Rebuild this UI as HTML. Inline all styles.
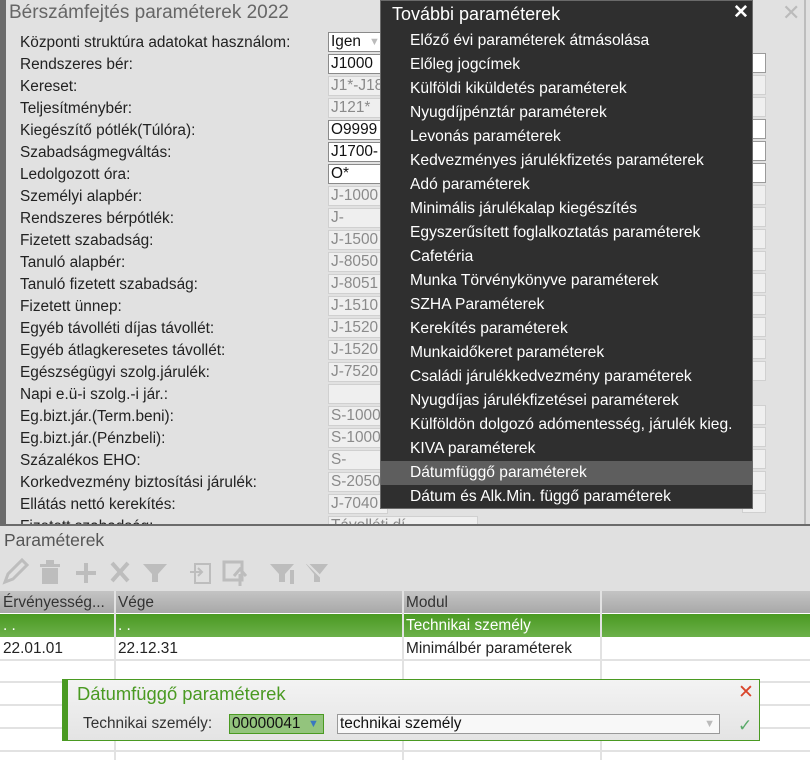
<!DOCTYPE html>
<html><head><meta charset="utf-8"><style>
*{margin:0;padding:0;box-sizing:border-box}
body{width:810px;height:760px;overflow:hidden;background:#e0e0e0;font-family:"Liberation Sans",Arial,sans-serif;position:relative}
.abs{position:absolute}
#top{left:0;top:0;width:810px;height:526px;background:#e1e1e1;border-left:6px solid #6b6b6b;border-bottom:2px solid #6b6b6b;overflow:hidden}
.lbl{position:absolute;left:14px;font-size:15.4px;color:#222;line-height:20px;white-space:nowrap}
.inp{position:absolute;left:322px;width:60px;height:20px;font-size:15.4px;line-height:18px;padding-left:2px;color:#8a8a8a;background:#efefef;border:1px solid #d0d0d0;overflow:hidden;white-space:nowrap}
.inp.w{background:#fff;border:1px solid #8a8a8a;color:#111}
.rb{position:absolute;left:736px;width:24px;height:20px;background:#efefef;border:1px solid #d0d0d0}
.rb.w{background:#fff;border-color:#9a9a9a}
#menu{left:380px;top:0;width:373px;height:509px;background:#2f2f2f;border:1px solid #6a6a6a;color:#fff}
.mi{position:absolute;left:29px;font-size:15.6px;line-height:24px;height:24px;white-space:nowrap}
.hd{background:linear-gradient(#c4c4c4,#a8a8a8);height:22px;top:591px}
.cell{position:absolute;font-size:15.4px;line-height:23px;padding-left:3px;white-space:nowrap}
.hl{position:absolute;left:0;width:810px;height:2px;background:#e2e2e2}
.vl{position:absolute;width:2px;background:#e2e2e2}
</style></head><body>
<div id="top" class="abs">
<div class="abs" style="left:3px;top:2px;font-size:19px;color:#666">Bérszámfejtés paraméterek 2022</div>
<div class="abs" style="left:776px;top:0px;font-size:22px;color:#bbb">✕</div>
<div class="lbl" style="top:33px">Központi struktúra adatokat használom:</div>
<div class="lbl" style="top:55px">Rendszeres bér:</div>
<div class="lbl" style="top:77px">Kereset:</div>
<div class="lbl" style="top:99px">Teljesítménybér:</div>
<div class="lbl" style="top:121px">Kiegészítő pótlék(Túlóra):</div>
<div class="lbl" style="top:143px">Szabadságmegváltás:</div>
<div class="lbl" style="top:165px">Ledolgozott óra:</div>
<div class="lbl" style="top:187px">Személyi alapbér:</div>
<div class="lbl" style="top:209px">Rendszeres bérpótlék:</div>
<div class="lbl" style="top:231px">Fizetett szabadság:</div>
<div class="lbl" style="top:253px">Tanuló alapbér:</div>
<div class="lbl" style="top:275px">Tanuló fizetett szabadság:</div>
<div class="lbl" style="top:297px">Fizetett ünnep:</div>
<div class="lbl" style="top:319px">Egyéb távolléti díjas távollét:</div>
<div class="lbl" style="top:341px">Egyéb átlagkeresetes távollét:</div>
<div class="lbl" style="top:363px">Egészségügyi szolg.járulék:</div>
<div class="lbl" style="top:385px">Napi e.ü-i szolg.-i jár.:</div>
<div class="lbl" style="top:407px">Eg.bizt.jár.(Term.beni):</div>
<div class="lbl" style="top:429px">Eg.bizt.jár.(Pénzbeli):</div>
<div class="lbl" style="top:451px">Százalékos EHO:</div>
<div class="lbl" style="top:473px">Korkedvezmény biztosítási járulék:</div>
<div class="lbl" style="top:495px">Ellátás nettó kerekítés:</div>
<div class="lbl" style="top:517px">Fizetett szabadság:</div>
<div class="inp w" style="top:32px">Igen<span style="position:absolute;left:40px;top:0;color:#bbb;font-size:11px">▼</span></div>
<div class="inp w" style="top:54px">J1000</div>
<div class="inp" style="top:76px">J1*-J18</div>
<div class="inp" style="top:98px">J121*</div>
<div class="inp w" style="top:120px">O9999</div>
<div class="inp w" style="top:142px">J1700-</div>
<div class="inp w" style="top:164px">O*</div>
<div class="inp" style="top:186px">J-1000</div>
<div class="inp" style="top:208px">J-</div>
<div class="inp" style="top:230px">J-1500</div>
<div class="inp" style="top:252px">J-8050</div>
<div class="inp" style="top:274px">J-8051</div>
<div class="inp" style="top:296px">J-1510</div>
<div class="inp" style="top:318px">J-1520</div>
<div class="inp" style="top:340px">J-1520</div>
<div class="inp" style="top:362px">J-7520</div>
<div class="inp" style="top:384px"></div>
<div class="inp" style="top:406px">S-1000</div>
<div class="inp" style="top:428px">S-1000</div>
<div class="inp" style="top:450px">S-</div>
<div class="inp" style="top:472px">S-2050</div>
<div class="inp" style="top:494px">J-7040</div>
<div class="inp" style="top:516px;width:150px">Távolléti dí</div>
<div class="rb w" style="top:53px"></div><div class="rb" style="top:75px"></div><div class="rb" style="top:97px"></div>
<div class="rb w" style="top:119px"></div><div class="rb w" style="top:141px"></div><div class="rb w" style="top:163px"></div>
<div class="rb" style="top:185px"></div><div class="rb" style="top:207px"></div><div class="rb" style="top:229px"></div>
<div class="rb" style="top:251px"></div><div class="rb" style="top:273px"></div><div class="rb" style="top:295px"></div>
<div class="rb" style="top:317px"></div><div class="rb" style="top:339px"></div><div class="rb" style="top:361px"></div>
<div class="rb" style="top:405px"></div><div class="rb" style="top:427px"></div><div class="rb" style="top:449px"></div>
<div class="rb" style="top:471px"></div><div class="rb" style="top:493px"></div>
<div class="abs" style="left:798px;top:0;width:2px;height:526px;background:#bdbdbd"></div>
</div>
<div id="menu" class="abs">
<div class="abs" style="left:11px;top:3px;font-size:18px">További paraméterek</div>
<div class="abs" style="left:352px;top:0px;font-size:19px;font-weight:bold">✕</div>
<div class="abs" style="left:0;top:460px;width:371px;height:24px;background:#5e5e5e"></div>
<div class="mi" style="top:28px">Előző évi paraméterek átmásolása</div>
<div class="mi" style="top:52px">Előleg jogcímek</div>
<div class="mi" style="top:76px">Külföldi kiküldetés paraméterek</div>
<div class="mi" style="top:100px">Nyugdíjpénztár paraméterek</div>
<div class="mi" style="top:124px">Levonás paraméterek</div>
<div class="mi" style="top:148px">Kedvezményes járulékfizetés paraméterek</div>
<div class="mi" style="top:172px">Adó paraméterek</div>
<div class="mi" style="top:196px">Minimális járulékalap kiegészítés</div>
<div class="mi" style="top:220px">Egyszerűsített foglalkoztatás paraméterek</div>
<div class="mi" style="top:244px">Cafetéria</div>
<div class="mi" style="top:268px">Munka Törvénykönyve paraméterek</div>
<div class="mi" style="top:292px">SZHA Paraméterek</div>
<div class="mi" style="top:316px">Kerekítés paraméterek</div>
<div class="mi" style="top:340px">Munkaidőkeret paraméterek</div>
<div class="mi" style="top:364px">Családi járulékkedvezmény paraméterek</div>
<div class="mi" style="top:388px">Nyugdíjas járulékfizetései paraméterek</div>
<div class="mi" style="top:412px">Külföldön dolgozó adómentesség, járulék kieg.</div>
<div class="mi" style="top:436px">KIVA paraméterek</div>
<div class="mi" style="top:460px">Dátumfüggő paraméterek</div>
<div class="mi" style="top:484px">Dátum és Alk.Min. függő paraméterek</div>
</div>
<div class="abs" style="left:4px;top:530px;font-size:17.5px;color:#555">Paraméterek</div>
<svg class="abs" style="left:0;top:556px" width="340" height="32" fill="#bdbdbd" stroke="#bdbdbd">
<path d="M5 26 L8 18 L22 4 L27 9 L13 23 Z" fill="none" stroke-width="3"/>
<rect x="40" y="8" width="20" height="3" stroke="none"/><rect x="46" y="4" width="8" height="4" stroke="none"/>
<rect x="42" y="12" width="16" height="16" stroke="none"/>
<path d="M86 7 V27 M76 17 H96" stroke-width="4" fill="none"/>
<path d="M112 7 L128 25 M128 7 L112 25" stroke-width="4"/>
<path d="M143 8 H167 L158 18 V26 H152 V18 Z" stroke="none"/>
<rect x="195" y="8" width="15" height="19" fill="none" stroke-width="2"/><path d="M190 16 H202 M198 12 L202 16 L198 20" fill="none" stroke-width="2"/>
<rect x="224" y="6" width="18" height="18" fill="none" stroke-width="3"/><path d="M240 30 V18 M234 20 L240 13 L246 20" stroke-width="3" fill="none"/>
<path d="M270 8 H294 L285 18 V26 H279 V18 Z" stroke="none"/><rect x="290" y="14" width="4" height="14" stroke="none"/>
<path d="M306 8 H328 L320 18 V26 H314 V18 Z" stroke="none"/><path d="M306 6 L328 28" stroke="#e0e0e0" stroke-width="2"/>
</svg>
<div class="abs hd" style="left:0;width:810px"></div>
<div class="cell" style="left:0;top:591px;color:#333">Érvényesség...</div>
<div class="cell" style="left:115px;top:591px;color:#333">Vége</div>
<div class="cell" style="left:403px;top:591px;color:#333">Modul</div>
<div class="abs" style="left:0;top:613px;width:810px;height:24px;background:linear-gradient(#4a9a22,#6cb04a);border-top:1px solid #fff"></div>
<div class="cell" style="left:0;top:614px;color:#fff">. .</div>
<div class="cell" style="left:115px;top:614px;color:#fff">. .</div>
<div class="cell" style="left:403px;top:614px;color:#fff">Technikai személy</div>
<div class="abs" style="left:0;top:637px;width:810px;height:123px;background:#fff"></div>
<div class="cell" style="left:0;top:637px;color:#222">22.01.01</div>
<div class="cell" style="left:115px;top:637px;color:#222">22.12.31</div>
<div class="cell" style="left:403px;top:637px;color:#222">Minimálbér paraméterek</div>
<div class="hl" style="top:659px"></div><div class="hl" style="top:681px"></div><div class="hl" style="top:704px"></div><div class="hl" style="top:727px"></div><div class="hl" style="top:750px"></div>
<div class="vl" style="left:114px;top:591px;height:169px"></div><div class="vl" style="left:402px;top:591px;height:169px"></div><div class="vl" style="left:600px;top:591px;height:169px"></div>
<div class="abs" style="left:62px;top:679px;width:698px;height:62px;background:linear-gradient(#f3f3f3,#e4e4e4);border:1px solid #4a9a22;border-left:6px solid #4a9a22"></div>
<div class="abs" style="left:77px;top:683px;font-size:18.4px;color:#4a9a22">Dátumfüggő paraméterek</div>
<div class="abs" style="left:83px;top:715px;font-size:15.4px;color:#333">Technikai személy:</div>
<div class="abs" style="left:229px;top:714px;width:95px;height:20px;background:#93c47d;border:1px solid #4a9a22;font-size:15.4px;line-height:18px;padding-left:2px;color:#111">00000041<span style="position:absolute;left:78px;top:0;color:#3a78c0;font-size:11px">▼</span></div>
<div class="abs" style="left:337px;top:714px;width:383px;height:20px;background:#f8f8f8;border:1px solid #999;font-size:15.4px;line-height:18px;padding-left:2px;color:#111">technikai személy<span style="position:absolute;right:4px;top:0;color:#bbb;font-size:11px">▼</span></div>
<div class="abs" style="left:738px;top:681px;font-size:19px;color:#d9452b">✕</div>
<div class="abs" style="left:738px;top:716px;font-size:17px;color:#5aaa6a">✓</div>
</body></html>
